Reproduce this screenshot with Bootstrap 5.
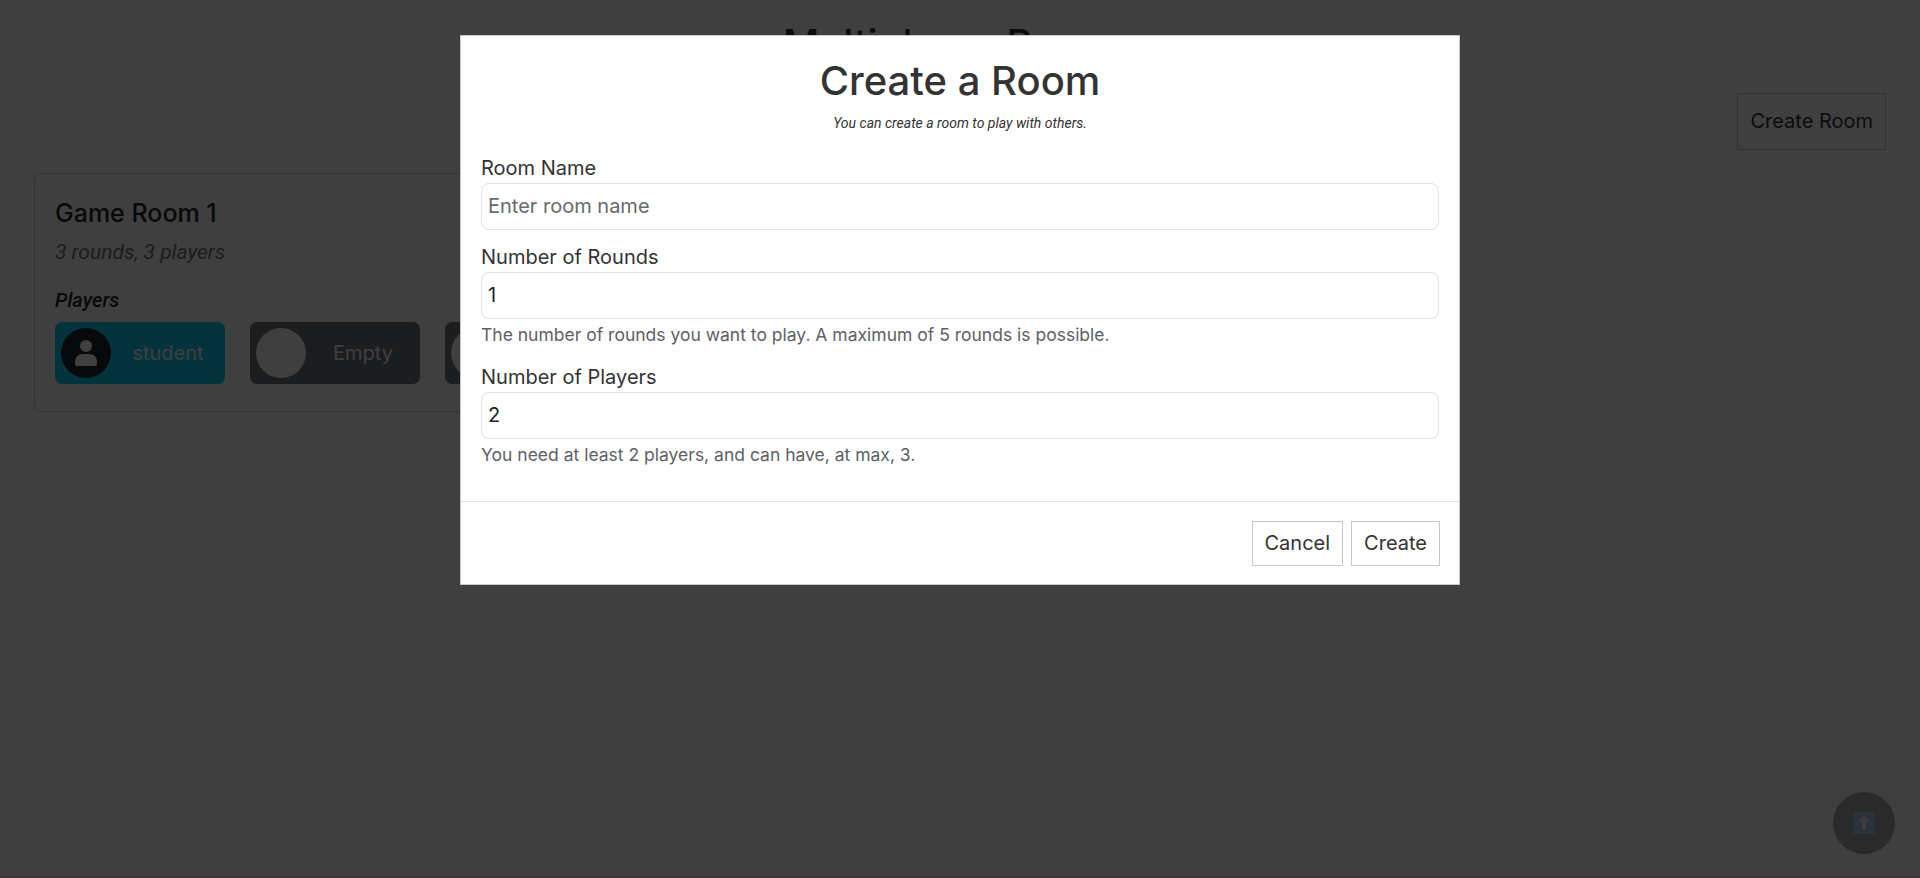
<!DOCTYPE html>
<html lang="en">
<head>
<meta charset="utf-8">
<meta name="viewport" content="width=device-width, initial-scale=1">
<title>Multiplayer Rooms</title>
<link href="https://cdn.jsdelivr.net/npm/bootstrap@5.3.0/dist/css/bootstrap.min.css" rel="stylesheet">
<style>
  :root { --ink: #333; --line: #c8c8c8; }
  body { font-family: Inter, "Liberation Sans", sans-serif; font-size: 20px; line-height: 30px; background: #fbfbfb; color: var(--ink); }
  .fst-italic { font-family: Roboto, Inter, sans-serif; }
  .lobby { min-height: 100vh; padding: 20px 34px; border-bottom: 2px solid #f0dcec; }
  .page-title { font-size: 40px; line-height: 48px; margin-bottom: 25px; }
  .btn-flat { --bs-btn-font-size: 20px; --bs-btn-line-height: 29px; --bs-btn-color: var(--ink); --bs-btn-border-color: var(--line); --bs-btn-border-radius: 0; --bs-btn-padding-x: 12px; --bs-btn-padding-y: 7px; --bs-btn-bg: transparent; }
  .btn-tall { --bs-btn-padding-y: 13px; }
  .room-card { width: 604px; max-width: 100%; margin-top: 23px; border-color: #d0d0d0; background: transparent; color: #212529; }
  .room-card .card-body { padding: 24px 20px 27px; }
  .room-name { font-size: 25px; line-height: 30px; margin-bottom: 9px; }
  .room-rules { font-size: 21px; }
  .seats-title { font-size: 20px; line-height: 24px; margin: 21px 0 10px; }
  .seats { gap: 25px; }
  .seat { width: 170px; height: 62px; padding-left: 6px; border-radius: 7px; background: #6c757d; color: #f8f9fa; }
  .seat-taken { background: #0dcaf0; }
  .avatar { width: 50px; height: 50px; flex: none; background: #fbfbfb; }
  .seat-taken .avatar { background: #212529; }
  .to-top { right: 25px; bottom: 24px; width: 62px; height: 62px; background: #a8a8a8; }
  .modal-backdrop { --bs-backdrop-opacity: .75; }
  .dialog-wide { max-width: 1000px; margin-top: 35px; }
  .modal-content { border-radius: 0; border-color: var(--line); color: var(--ink); }
  .modal-body { padding: 21px 20px 31px; }
  .dialog-title { font-size: 40px; line-height: 48px; margin-bottom: 8px; }
  .dialog-note { font-size: 14px; line-height: 21px; margin-bottom: 19px; }
  .field + .field { margin-top: 12px; }
  .field .form-control { font-size: 20px; line-height: 30px; height: 47px; padding: 6px 6px 8px; border-radius: 8px; color: #212529; }
  .field .form-control::placeholder { color: #666a6e; }
  .field .form-text { line-height: 26px; margin: 3px 0 14px; color: #5d6165; }
  .field:last-child .form-text { margin-bottom: 2px; }
  .field:has(.form-text) + .field { margin-top: 0; }
  .modal-footer { padding: 19px 19px 18px; gap: 8px; border-radius: 0; }
  .modal-footer > * { margin: 0; }
</style>
</head>
<body>
<main class="lobby">
  <h1 class="page-title text-center">Multiplayer Rooms</h1>
  <div class="d-flex justify-content-end">
    <button type="button" class="btn btn-flat btn-tall">Create Room</button>
  </div>
  <section class="card room-card">
    <div class="card-body">
      <h2 class="room-name">Game Room 1</h2>
      <p class="room-rules fst-italic text-secondary mb-0">3 rounds, 3 players</p>
      <h3 class="seats-title fst-italic">Players</h3>
      <div class="seats d-flex">
        <div class="seat seat-taken d-flex align-items-center">
          <span class="avatar rounded-circle d-flex align-items-center justify-content-center">
            <svg width="22" height="26" viewBox="0 0 22 26" fill="#fff" aria-hidden="true"><circle cx="11" cy="6" r="6"/><path d="M0 22c0-5 3-8 8-8h6c5 0 8 3 8 8v2q0 2-2 2H2q-2 0-2-2z"/></svg>
          </span>
          <span class="flex-grow-1 text-center">student</span>
        </div>
        <div class="seat d-flex align-items-center">
          <span class="avatar rounded-circle"></span>
          <span class="flex-grow-1 text-center">Empty</span>
        </div>
        <div class="seat d-flex align-items-center">
          <span class="avatar rounded-circle"></span>
          <span class="flex-grow-1 text-center">Empty</span>
        </div>
      </div>
    </div>
  </section>
</main>

<button type="button" class="to-top position-fixed border-0 rounded-circle p-0 d-flex align-items-center justify-content-center" aria-label="Back to top">
  <svg width="22" height="22" viewBox="0 0 22 22" aria-hidden="true"><rect width="22" height="22" rx="1" fill="#a8c8f0"/><path d="M11 3.500l5.500 5.500-1 1.200H13V17q0 1-1 1h-2q-1 0-1-1v-6.800H6.500l-1-1.200z" fill="#fff0e4"/></svg>
</button>

<div class="modal-backdrop show"></div>
<div class="modal show d-block" role="dialog" aria-modal="true" aria-labelledby="dialogTitle">
  <div class="modal-dialog dialog-wide">
    <form class="modal-content">
      <div class="modal-body">
        <h2 class="dialog-title text-center" id="dialogTitle">Create a Room</h2>
        <p class="dialog-note text-center fst-italic">You can create a room to play with others.</p>
        <div class="field">
          <label class="d-block" for="roomName">Room Name</label>
          <input class="form-control" type="text" id="roomName" placeholder="Enter room name">
        </div>
        <div class="field">
          <label class="d-block" for="rounds">Number of Rounds</label>
          <input class="form-control" type="number" id="rounds" value="1" min="1" max="5">
          <div class="form-text">The number of rounds you want to play. A maximum of 5 rounds is possible.</div>
        </div>
        <div class="field">
          <label class="d-block" for="players">Number of Players</label>
          <input class="form-control" type="number" id="players" value="2" min="2" max="3">
          <div class="form-text">You need at least 2 players, and can have, at max, 3.</div>
        </div>
      </div>
      <div class="modal-footer">
        <button type="button" class="btn btn-flat">Cancel</button>
        <button type="submit" class="btn btn-flat">Create</button>
      </div>
    </form>
  </div>
</div>
<script src="https://cdn.jsdelivr.net/npm/bootstrap@5.3.0/dist/js/bootstrap.bundle.min.js"></script>
</body>
</html>
